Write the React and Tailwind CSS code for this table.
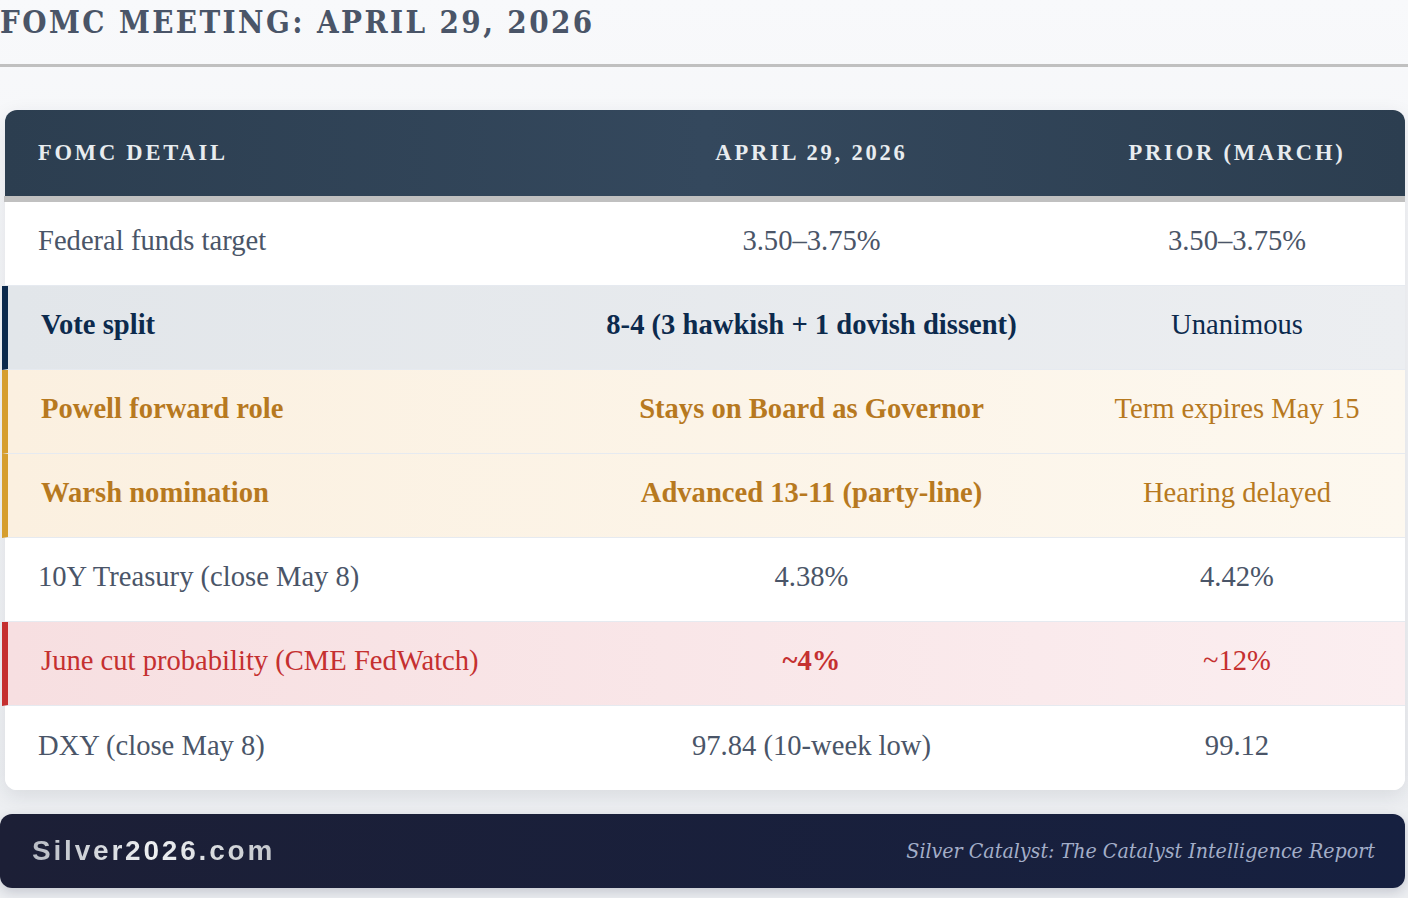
const ROWS = [
    { label: "Federal funds target", now: "3.50–3.75%", prior: "3.50–3.75%", tone: "plain" },
    { label: "Vote split", now: "8-4 (3 hawkish + 1 dovish dissent)", prior: "Unanimous", tone: "navy" },
    { label: "Powell forward role", now: "Stays on Board as Governor", prior: "Term expires May 15", tone: "gold" },
    { label: "Warsh nomination", now: "Advanced 13-11 (party-line)", prior: "Hearing delayed", tone: "gold" },
    { label: "10Y Treasury (close May 8)", now: "4.38%", prior: "4.42%", tone: "plain" },
    { label: "June cut probability (CME FedWatch)", now: "~4%", prior: "~12%", tone: "red" },
    { label: "DXY (close May 8)", now: "97.84 (10-week low)", prior: "99.12", tone: "plain" },
];

// highlighted rows carry a 6px bar that sits 3px outside the card edge
const TONES = {
    plain: {
        row: "grid-cols-[549px_515px_1fr] bg-white",
        label: "text-[#4a5568]",
        now: "text-[#4a5568]",
        prior: "text-[#4a5568]",
    },
    navy: {
        row: "grid-cols-[546px_515px_1fr] -ml-[3px] border-l-[6px] border-[#0c2a4d] bg-gradient-to-r from-[#e2e6ea] to-[#eceef1]",
        label: "font-bold text-[#0c2a4d]",
        now: "font-bold text-[#0c2a4d]",
        prior: "text-[#0c2a4d]",
    },
    gold: {
        row: "grid-cols-[546px_515px_1fr] -ml-[3px] border-l-[6px] border-[#d69e2e] bg-gradient-to-r from-[#fbf0e0] to-[#fdf8ef]",
        label: "font-bold text-[#b7791f]",
        now: "font-bold text-[#b7791f]",
        prior: "text-[#b7791f]",
    },
    red: {
        row: "grid-cols-[546px_515px_1fr] -ml-[3px] border-l-[6px] border-[#c53030] bg-gradient-to-r from-[#f7dfe1] to-[#fbeef0]",
        label: "text-[#c53030]",
        now: "font-bold text-[#c53030]",
        prior: "text-[#c53030]",
    },
};

export default function App() {
    return (
        <div className="min-h-[898px] w-[1408px] bg-gradient-to-b from-[#f8f9fb] to-[#eceef1] overflow-hidden">
            {/* Title */}
            <div className="h-[64px] pt-[2px]">
                <h1
                    className="text-[31px] leading-[40px] font-bold tracking-[2.4px] text-[#4a5568]"
                    style={{ fontFamily: '"DejaVu Serif Condensed", "DejaVu Serif", serif', fontStretch: "condensed" }}
                >
                    FOMC MEETING: APRIL 29, 2026
                </h1>
            </div>
            <div className="h-[3px] bg-[#c0c0c0]" />

            {/* Table card */}
            <div
                className="mt-[43px] ml-[5px] w-[1400px] rounded-xl bg-white shadow-[0_6px_20px_rgba(30,40,60,0.10)]"
                style={{ fontFamily: '"Liberation Serif", "Times New Roman", serif' }}
            >
                <div className="h-[86px] pb-[1px] rounded-t-xl bg-gradient-to-r from-[#2c3e50] via-[#34485d] to-[#2c3e50] grid grid-cols-[549px_515px_1fr] items-center text-[22.5px] font-bold tracking-[2.8px] text-[#e8ecef]">
                    <div className="pl-[33px]">FOMC DETAIL</div>
                    <div className="text-center">APRIL 29, 2026</div>
                    <div className="text-center">PRIOR (MARCH)</div>
                </div>
                <div className="h-[6px] -ml-px bg-[#c0c0c0]" />
                {ROWS.map((r, i) => {
                    const t = TONES[r.tone];
                    return (
                        <div
                            key={r.label}
                            className={`h-[84px] pb-[4px] grid items-center text-[28.6px] ${i < ROWS.length - 1 ? "border-b border-b-[#e6eaf0]" : "rounded-b-xl"} ${t.row}`}
                        >
                            <div className={`pl-[33px] ${t.label}`}>{r.label}</div>
                            <div className={`text-center ${t.now}`}>{r.now}</div>
                            <div className={`text-center ${t.prior}`}>{r.prior}</div>
                        </div>
                    );
                })}
            </div>

            {/* Footer */}
            <div className="mt-[24px] w-[1405px] h-[74px] rounded-xl bg-gradient-to-r from-[#1c1f36] to-[#162040] shadow-[0_4px_12px_rgba(20,30,60,0.18)] flex items-center justify-between pl-[32px] pr-[30px]">
                <span
                    className="text-[28px] font-bold tracking-[2.8px] bg-gradient-to-r from-[#b8bcc4] via-[#eef0f2] to-[#c4c7cc] bg-clip-text text-transparent"
                    style={{ fontFamily: '"Liberation Sans", Arial, sans-serif' }}
                >
                    Silver2026.com
                </span>
                <span
                    className="text-[21.2px] italic text-[#a3aec8]"
                    style={{ fontFamily: '"DejaVu Serif Condensed", "DejaVu Serif", serif', fontStretch: "condensed" }}
                >
                    Silver Catalyst: The Catalyst Intelligence Report
                </span>
            </div>
        </div>
    );
}
